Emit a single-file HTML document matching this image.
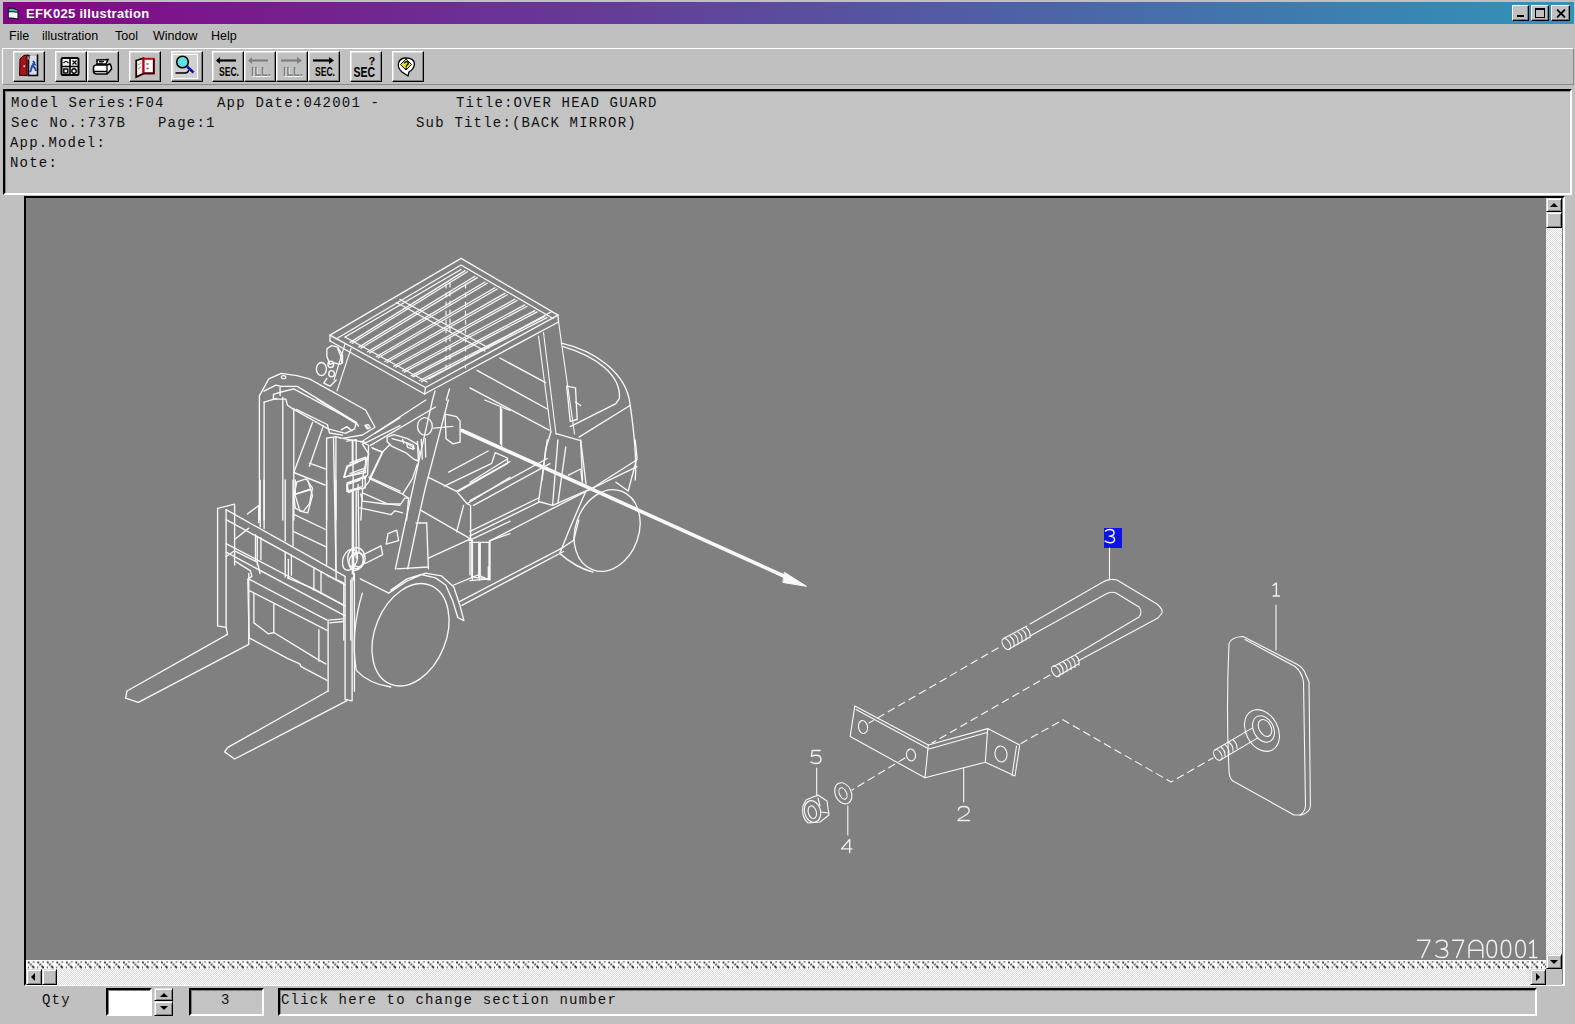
<!DOCTYPE html>
<html><head><meta charset="utf-8">
<style>
*{margin:0;padding:0;box-sizing:border-box}
html,body{width:1575px;height:1024px;overflow:hidden;background:#c0c0c0;font-family:"Liberation Sans",sans-serif;position:relative}
.a{position:absolute}
#title{left:3px;top:2px;width:1571px;height:22px;background:linear-gradient(to right,#850585,#3094b8)}
#title .t{left:23px;top:4px;color:#fff;font-weight:bold;font-size:13px;letter-spacing:0.3px;white-space:pre}
.cb{top:3px;width:17px;height:16px;background:#c0c0c0;border-top:1px solid #fff;border-left:1px solid #fff;border-right:1px solid #000;border-bottom:1px solid #000;box-shadow:inset -1px -1px 0 #808080}
.menu{top:29px;font-size:12.5px;color:#000;white-space:pre}
#tb{left:2px;top:48px;width:1572px;height:37px;border-top:1px solid #fff;border-left:1px solid #fff;border-bottom:1px solid #8a8a8a;border-right:1px solid #8a8a8a}
.btn{top:51px;width:32px;height:31px;background:#c0c0c0;border-top:1px solid #fff;border-left:1px solid #fff;border-right:1px solid #000;border-bottom:1px solid #000;box-shadow:inset -1px -1px 0 #808080,inset 1px 1px 0 #dfdfdf}
.btn svg{position:absolute;left:-1px;top:-1px}
#info{left:3px;top:89px;width:1569px;height:106px;background:#c3c3c3;border-top:2px solid #000;border-left:2px solid #000;border-right:2px solid #fff;border-bottom:2px solid #fff;box-shadow:inset 1px 1px 0 #808080}
.mono{font-family:"Liberation Mono",monospace;font-size:14px;letter-spacing:1.2px;color:#111;white-space:pre;line-height:20px}
#draw{left:24px;top:196px;width:1541px;height:790px;border-top:2px solid #000;border-left:2px solid #000;border-right:2px solid #fff;border-bottom:2px solid #fff;background:#808080}
.sb{background:#c0c0c0;border-top:1px solid #dfdfdf;border-left:1px solid #dfdfdf;border-right:1px solid #000;border-bottom:1px solid #000;box-shadow:inset 1px 1px 0 #fff,inset -1px -1px 0 #808080}
.sunk{border-top:2px solid #000;border-left:2px solid #000;border-right:2px solid #fff;border-bottom:2px solid #fff;box-shadow:inset 1px 1px 0 #808080}
</style></head><body>
<div class="a" id="title">
  <svg class="a" style="left:4px;top:5px" width="14" height="14" viewBox="0 0 14 14"><path d="M0.8,0.8 H6 L11.5,3 V13 L10,12.5 Q6,11 1,11.5 Z" fill="#0a0a30"/><path d="M1.8,1.8 H6 L10.5,3.6 V4.8 L6,4.2 H1.8 Z" fill="#5aa8a8"/><path d="M1.8,5.2 H6 L10.5,5.8 V11.5 Q6,10 1.8,10.6 Z" fill="#f4f8f0"/></svg>
  <div class="a t">EFK025 illustration</div>
  <div class="a cb" style="left:1509px"><div class="a" style="left:4px;top:9px;width:7px;height:2px;background:#000"></div></div>
  <div class="a cb" style="left:1528px;width:18px"><div class="a" style="left:3px;top:2px;width:10px;height:10px;border:1px solid #000;border-top-width:2px"></div></div>
  <div class="a cb" style="left:1548px;width:19px"><svg class="a" style="left:4px;top:3px" width="10" height="9"><path d="M1 0.5L9 8.5M9 0.5L1 8.5" stroke="#000" stroke-width="1.8"/></svg></div>
</div>
<div class="a menu" style="left:9px">File</div>
<div class="a menu" style="left:42px">illustration</div>
<div class="a menu" style="left:115px">Tool</div>
<div class="a menu" style="left:153px">Window</div>
<div class="a menu" style="left:211px">Help</div>
<div class="a" id="tb"></div>
<!-- toolbar buttons -->
<div class="a btn" style="left:13px"><svg width="32" height="31"><path d="M6.5,24.5 L7,8 L9,5.8 L12,4 L14,4.5 L14,24.5 Z" fill="#a8121a" stroke="#200" stroke-width="1"/><circle cx="11.3" cy="15.3" r="1" fill="#fdd"/><path d="M14.5,24 V8.5 H16.5 V24 Z" fill="#111"/><path d="M14,4 L16.5,5 V8" stroke="#111" stroke-width="1.5" fill="none"/><rect x="16.6" y="5" width="7.4" height="18.6" fill="#dcdcf0"/><path d="M24.5,3.5 V24.5 H14.5" stroke="#000" stroke-width="1.6" fill="none"/><path d="M20,10 L21.5,12 L19,15 L18,19 L17,21 M19.5,15 L22,17 L23,20 M19,13 L23,14" stroke="#1a4aa0" stroke-width="1.8" fill="none"/></svg></div>
<div class="a btn" style="left:55px"><svg width="32" height="31"><rect x="6.5" y="7" width="17" height="17" rx="1.5" fill="#f4f4f4" stroke="#000" stroke-width="2"/><path d="M15,7 V24 M6.5,15.5 H23.5" stroke="#000" stroke-width="1.6"/><path d="M8.5,12 Q11,9 13.5,12" stroke="#000" stroke-width="1.2" fill="none"/><path d="M17.5,9.5 L21.5,13.5 M21.5,9.5 L17.5,13.5" stroke="#000" stroke-width="1.2"/><rect x="8.8" y="18" width="4" height="4" fill="none" stroke="#000" stroke-width="1.4"/><circle cx="19" cy="20" r="2.2" fill="none" stroke="#000" stroke-width="1.4"/></svg></div>
<div class="a btn" style="left:87px"><svg width="32" height="31"><path d="M10,9 L21,8.5 L19,13 L10,13 Z" fill="#fff" stroke="#000" stroke-width="1.5"/><path d="M12,10.5 H17 M12,12 H16" stroke="#000" stroke-width="1"/><path d="M6.5,16 Q7,14 9,14 L20,14 L23,13 Q24.5,15 24.5,18 L22,21 L20,23 H9 Q6.5,22.5 6.5,20 Z" fill="#fff" stroke="#000" stroke-width="1.6"/><path d="M7,20.5 H20 M20,14 V23" stroke="#000" stroke-width="1.3"/></svg></div>
<div class="a btn" style="left:129px"><svg width="32" height="31"><path d="M7.2,9.5 L14.4,7.2 V22.6 L7.2,26 Z" fill="#fff0f0" stroke="#200" stroke-width="1.8"/><path d="M9,14 L12,12 M9,18 L12,16" stroke="#999" stroke-width="1"/><rect x="14.6" y="7.8" width="10.2" height="14.6" fill="#fff" stroke="#c00018" stroke-width="2"/><path d="M24.8,8 V22.4 H14.6" stroke="#300" stroke-width="1.6" fill="none"/><path d="M17.5,13 H19.5 M17.5,17.5 H19.5" stroke="#555" stroke-width="1.3"/></svg></div>
<div class="a btn" style="left:171px"><svg width="32" height="31"><path d="M1.8,27.5 V3.3 H26.5" stroke="#fff" stroke-width="1.2" fill="none"/><path d="M1.8,27.5 H26.5 V3.3" stroke="#fff" stroke-width="1.2" fill="none"/><rect x="2.5" y="4" width="23.5" height="23" fill="#d0d0d0"/><circle cx="11.5" cy="11" r="5.8" fill="#5ce4e4" stroke="#000" stroke-width="1.6"/><path d="M16,15.5 L22.5,21.5" stroke="#1010c0" stroke-width="2.6"/><path d="M4.5,22 H14.5 Q17,21.5 18,19" stroke="#000" stroke-width="1.6" fill="none"/></svg></div>
<div class="a btn" style="left:212px"><svg width="32" height="31"><path d="M5,9.5 H24" stroke="#000" stroke-width="2.2"/><path d="M4,9.5 L8,6 V13 Z" fill="#000"/><text x="7" y="25" font-family="Liberation Sans" font-weight="bold" font-size="13" fill="#000" textLength="20" lengthAdjust="spacingAndGlyphs">SEC.</text></svg></div>
<div class="a btn" style="left:244px"><svg width="32" height="31"><path d="M5,9.5 H24" stroke="#808080" stroke-width="2.2"/><path d="M4,9.5 L8,6 V13 Z" fill="#808080"/><text x="8" y="26" font-family="Liberation Sans" font-weight="bold" font-size="13" fill="#fff" textLength="19" lengthAdjust="spacingAndGlyphs">ILL.</text><text x="7" y="25" font-family="Liberation Sans" font-weight="bold" font-size="13" fill="#808080" textLength="20" lengthAdjust="spacingAndGlyphs">ILL.</text></svg></div>
<div class="a btn" style="left:276px"><svg width="32" height="31"><path d="M5,9.5 H24" stroke="#808080" stroke-width="2.2"/><path d="M26,9.5 L21,6 V13 Z" fill="#808080"/><text x="8" y="26" font-family="Liberation Sans" font-weight="bold" font-size="13" fill="#fff" textLength="19" lengthAdjust="spacingAndGlyphs">ILL.</text><text x="7" y="25" font-family="Liberation Sans" font-weight="bold" font-size="13" fill="#808080" textLength="20" lengthAdjust="spacingAndGlyphs">ILL.</text></svg></div>
<div class="a btn" style="left:308px"><svg width="32" height="31"><path d="M5,9.5 H24" stroke="#000" stroke-width="2.2"/><path d="M26,9.5 L21,6 V13 Z" fill="#000"/><text x="7" y="25" font-family="Liberation Sans" font-weight="bold" font-size="13" fill="#000" textLength="20" lengthAdjust="spacingAndGlyphs">SEC.</text></svg></div>
<div class="a btn" style="left:350px"><svg width="32" height="31"><text x="3.5" y="26" font-family="Liberation Sans" font-weight="bold" font-size="14" fill="#000" textLength="21.5" lengthAdjust="spacingAndGlyphs">SEC</text><text x="18.5" y="13.5" font-family="Liberation Sans" font-weight="bold" font-size="11" fill="#000">?</text></svg></div>
<div class="a btn" style="left:392px"><svg width="32" height="31"><path d="M14,7 Q8,7 6.5,12 Q5.5,17 10,21 L16,25 L17,21 Q22,18 22.5,13 Q22,7 14,7 Z" fill="#fff" stroke="#000" stroke-width="1.3"/><path d="M14,8 L19.5,13.5 L14,19 L8.5,13.5 Z" fill="#e8e820" stroke="#000" stroke-width="1"/><text x="11.3" y="17.5" font-family="Liberation Sans" font-weight="bold" font-size="10" fill="#000">?</text></svg></div>

<div class="a" id="info"></div>
<div class="a mono" style="left:11px;top:93px">Model Series:F04</div>
<div class="a mono" style="left:217px;top:93px">App Date:042001 -</div>
<div class="a mono" style="left:456px;top:93px">Title:OVER HEAD GUARD</div>
<div class="a mono" style="left:11px;top:113px">Sec No.:737B</div>
<div class="a mono" style="left:158px;top:113px">Page:1</div>
<div class="a mono" style="left:416px;top:113px">Sub Title:(BACK MIRROR)</div>
<div class="a mono" style="left:10px;top:133px">App.Model:</div>
<div class="a mono" style="left:10px;top:153px">Note:</div>

<div class="a" id="draw"></div>
<!-- DRAWING -->
<svg class="a" style="left:0;top:0" width="1575" height="1024" viewBox="0 0 1575 1024" id="dsvg">
<!--DRAWSTART-->
<g fill="none" stroke-linejoin="round" stroke-linecap="round">
<rect x="1104" y="528" width="18" height="20" fill="#0c12ea" stroke="none"/>
<path d="M1105.47,531.08 C1106.90,529.76 1108.33,529.50 1109.75,529.50 C1112.60,529.50 1114.03,531.08 1114.03,533.06 C1114.03,535.04 1112.12,536.10 1109.28,536.10 C1112.60,536.10 1114.50,537.42 1114.50,539.40 C1114.50,541.64 1112.60,542.70 1109.75,542.70 C1107.85,542.70 1105.95,542.04 1105.00,541.12" stroke="#ffffff" stroke-width="1.4" fill="none"/>
<path d="M1109.5,548.0 L1109.5,579.0" stroke="#f8f8f8" stroke-width="1.1"/>
<path d="M1030,624 L1103,582 Q1109,578 1117,580 L1157,604 Q1163,609 1162,613 L1158,618 L1078,661" stroke="#f8f8f8" stroke-width="1.1" fill="none"/>
<path d="M1030,636 L1106,594 Q1111,591 1116,593 L1139,607 Q1143,612 1139,617 L1075,655" stroke="#f8f8f8" stroke-width="1.1" fill="none"/>
<path d="M1003.5,638.5 L1027.0,626.0" stroke="#f8f8f8" stroke-width="1.1"/>
<path d="M1008.5,649.5 L1030.0,637.0" stroke="#f8f8f8" stroke-width="1.1"/>
<ellipse cx="1006.3" cy="644" rx="3.5" ry="6" transform="rotate(-30 1006.3 644)" stroke="#f8f8f8" stroke-width="1.1"/>
<path d="M1010,636.5 Q1015,639.5 1014,646.5" stroke="#f8f8f8" stroke-width="1.1" fill="none"/>
<path d="M1014,634.3 Q1019,637.3 1018,644.3" stroke="#f8f8f8" stroke-width="1.1" fill="none"/>
<path d="M1018,632.1 Q1023,635.1 1022,642.1" stroke="#f8f8f8" stroke-width="1.1" fill="none"/>
<path d="M1022,629.9 Q1027,632.9 1026,639.9" stroke="#f8f8f8" stroke-width="1.1" fill="none"/>
<path d="M1026,627.7 Q1031,630.7 1030,637.7" stroke="#f8f8f8" stroke-width="1.1" fill="none"/>
<path d="M1053.5,666.5 L1074.0,655.5" stroke="#f8f8f8" stroke-width="1.1"/>
<path d="M1058.0,676.0 L1078.5,664.0" stroke="#f8f8f8" stroke-width="1.1"/>
<ellipse cx="1055.8" cy="671.3" rx="3.5" ry="6" transform="rotate(-30 1055.8 671.3)" stroke="#f8f8f8" stroke-width="1.1"/>
<path d="M1059,664.0 Q1064,667.0 1063,674.0" stroke="#f8f8f8" stroke-width="1.1" fill="none"/>
<path d="M1063,661.8 Q1068,664.8 1067,671.8" stroke="#f8f8f8" stroke-width="1.1" fill="none"/>
<path d="M1067,659.6 Q1072,662.6 1071,669.6" stroke="#f8f8f8" stroke-width="1.1" fill="none"/>
<path d="M1071,657.4 Q1076,660.4 1075,667.4" stroke="#f8f8f8" stroke-width="1.1" fill="none"/>
<path d="M1075,655.2 Q1080,658.2 1079,665.2" stroke="#f8f8f8" stroke-width="1.1" fill="none"/>
<path d="M998.0,648.0 L869.0,723.0" stroke="#f8f8f8" stroke-width="1.1" stroke-dasharray="7 5"/>
<path d="M1050.0,675.0 L932.0,743.0" stroke="#f8f8f8" stroke-width="1.1" stroke-dasharray="7 5"/>
<path d="M905.0,758.0 L852.0,790.0" stroke="#f8f8f8" stroke-width="1.1" stroke-dasharray="7 5"/>
<path d="M1021.0,743.4 L1063.0,719.8 L1171.0,782.0 L1213.0,757.9" stroke="#f8f8f8" stroke-width="1.1" stroke-dasharray="7 5"/>
<path d="M854.8,705.9 L928.3,745.0 L925.0,777.8 L850.2,736.4Z" stroke="#f8f8f8" stroke-width="1.1"/>
<path d="M856.0,709.5 L928.0,748.5" stroke="#f8f8f8" stroke-width="1.1"/>
<path d="M928.3,745.0 L987.7,728.6" stroke="#f8f8f8" stroke-width="1.1"/>
<path d="M929.0,749.0 L987.0,732.5" stroke="#f8f8f8" stroke-width="1.1"/>
<path d="M987.7,728.6 L985.3,762.2" stroke="#f8f8f8" stroke-width="1.1"/>
<path d="M925.0,777.8 L985.3,762.2" stroke="#f8f8f8" stroke-width="1.1"/>
<path d="M987.7,728.6 L1019.7,745.0 L1015.0,776.0 L985.3,762.2" stroke="#f8f8f8" stroke-width="1.1"/>
<path d="M1016.5,746.0 L1012.0,776.0" stroke="#f8f8f8" stroke-width="1.1"/>
<ellipse cx="863" cy="727" rx="4.5" ry="6.5" transform="rotate(-10 863 727)" stroke="#f8f8f8" stroke-width="1.1"/>
<ellipse cx="911" cy="755" rx="4.5" ry="6" transform="rotate(-10 911 755)" stroke="#f8f8f8" stroke-width="1.1"/>
<ellipse cx="1001" cy="754" rx="6" ry="8" transform="rotate(-10 1001 754)" stroke="#f8f8f8" stroke-width="1.1"/>
<path d="M963.7,768.6 L963.7,802.0" stroke="#f8f8f8" stroke-width="1.1"/>
<ellipse cx="843.3" cy="793.3" rx="8" ry="11" transform="rotate(-25 843.3 793.3)" stroke="#f8f8f8" stroke-width="1.1"/>
<ellipse cx="843" cy="793.5" rx="3.5" ry="6" transform="rotate(-25 843 793.5)" stroke="#f8f8f8" stroke-width="1.1"/>
<path d="M847.8,806.0 L847.8,835.0" stroke="#f8f8f8" stroke-width="1.1"/>
<path d="M806,800 L818,795 L827,801 L829,815 L820,822 L808,823 Q801,817 803,806 Z" stroke="#f8f8f8" stroke-width="1.1" fill="none"/>
<ellipse cx="812.5" cy="811.5" rx="8" ry="11" transform="rotate(-15 812.5 811.5)" stroke="#f8f8f8" stroke-width="1.1"/>
<ellipse cx="812.3" cy="812.2" rx="4" ry="6.5" transform="rotate(-15 812.3 812.2)" stroke="#f8f8f8" stroke-width="1.1"/>
<path d="M818.0,798.0 L820.0,806.0" stroke="#f8f8f8" stroke-width="1.1"/>
<path d="M821.0,812.0 L829.0,813.0" stroke="#f8f8f8" stroke-width="1.1"/>
<path d="M816.7,768.0 L816.7,796.0" stroke="#f8f8f8" stroke-width="1.1"/>
<path d="M1243,636.5 L1296.5,664 Q1304,668 1306,675 L1309,681.7 L1310.4,806 Q1310,812 1301.6,815 L1294,815 L1233,781 Q1229,778 1229,770 Q1226,710 1229,643.6 Q1231,637 1243,636.5 Z" stroke="#f8f8f8" stroke-width="1.1" fill="none"/>
<path d="M1245,639.5 L1295,666.5 Q1302,672 1303.5,682 L1305.5,806 Q1305,812 1300,815" stroke="#f8f8f8" stroke-width="1.1" fill="none"/>
<path d="M1276.0,605.0 L1276.0,650.0" stroke="#f8f8f8" stroke-width="1.1"/>
<ellipse cx="1262" cy="730.5" rx="16" ry="22" transform="rotate(-28 1262 730.5)" stroke="#f8f8f8" stroke-width="1.1"/>
<ellipse cx="1263.5" cy="729" rx="10" ry="14" transform="rotate(-28 1263.5 729)" stroke="#f8f8f8" stroke-width="1.1"/>
<ellipse cx="1265" cy="728" rx="6" ry="9" transform="rotate(-28 1265 728)" stroke="#f8f8f8" stroke-width="1.1"/>
<path d="M1214.9,750.0 L1252.1,728.1" stroke="#f8f8f8" stroke-width="1.1"/>
<path d="M1220.7,759.8 L1257.9,737.9" stroke="#f8f8f8" stroke-width="1.1"/>
<ellipse cx="1217.8" cy="754.9" rx="3.5" ry="5.8" transform="rotate(-30 1217.8 754.9)" stroke="#f8f8f8" stroke-width="1.1"/>
<path d="M1221,747.0 Q1225.5,750.5 1225,756.0" stroke="#f8f8f8" stroke-width="1.1" fill="none"/>
<path d="M1225,744.6 Q1229.5,748.1 1229,753.6" stroke="#f8f8f8" stroke-width="1.1" fill="none"/>
<path d="M1229,742.2 Q1233.5,745.7 1233,751.2" stroke="#f8f8f8" stroke-width="1.1" fill="none"/>
<path d="M1233,739.8 Q1237.5,743.3 1237,748.8" stroke="#f8f8f8" stroke-width="1.1" fill="none"/>
<path d="M462.0,430.5 L786.0,577.0" stroke="#f8f8f8" stroke-width="3.6"/>
<path d="M784.7,572.5 L806.5,586.3 L783.2,582.5 Z" stroke="#f8f8f8" stroke-width="1" fill="#f8f8f8"/>
<path d="M1273.20,585.34 L1276.35,583.00 L1276.35,596.00 M1273.20,596.00 L1279.50,596.00" stroke="#f0f0f0" stroke-width="1.4" fill="none"/>
<path d="M958.35,810.00 C958.58,807.62 960.88,806.50 963.75,806.50 C967.20,806.50 969.15,808.18 969.15,810.70 C969.15,813.50 966.05,815.18 962.60,817.00 C959.73,818.54 958.00,819.80 958.00,820.50 L969.50,820.50" stroke="#f0f0f0" stroke-width="1.4" fill="none"/>
<path d="M849.69,852.50 L849.69,839.50 L841.50,848.86 L852.00,848.86" stroke="#f0f0f0" stroke-width="1.4" fill="none"/>
<path d="M820.20,750.50 L812.20,750.50 L811.50,756.35 C813.00,755.44 814.50,755.18 816.00,755.18 C819.20,755.18 821.00,757.00 821.00,759.34 C821.00,761.94 819.00,763.50 816.00,763.50 C814.00,763.50 812.20,762.85 811.00,761.94" stroke="#f0f0f0" stroke-width="1.4" fill="none"/>
<path d="M1417.50,940.30 L1430.00,940.30 L1421.88,957.50" stroke="#f0f0f0" stroke-width="1.5" fill="none"/>
<path d="M1436.30,942.36 C1438.10,940.64 1439.90,940.30 1441.70,940.30 C1445.30,940.30 1447.10,942.36 1447.10,944.94 C1447.10,947.52 1444.70,948.90 1441.10,948.90 C1445.30,948.90 1447.70,950.62 1447.70,953.20 C1447.70,956.12 1445.30,957.50 1441.70,957.50 C1439.30,957.50 1436.90,956.64 1435.70,955.44" stroke="#f0f0f0" stroke-width="1.5" fill="none"/>
<path d="M1452.80,940.30 L1463.60,940.30 L1456.58,957.50" stroke="#f0f0f0" stroke-width="1.5" fill="none"/>
<path d="M1469.00,957.50 L1469.00,948.04 C1469.00,942.88 1472.45,940.30 1475.90,940.30 C1479.35,940.30 1482.80,942.88 1482.80,948.04 L1482.80,957.50 M1469.00,950.28 L1482.80,950.28" stroke="#f0f0f0" stroke-width="1.5" fill="none"/>
<path d="M1491.75,940.30 C1487.95,940.30 1487.00,945.46 1487.00,948.90 C1487.00,952.34 1487.95,957.50 1491.75,957.50 C1495.55,957.50 1496.50,952.34 1496.50,948.90 C1496.50,945.46 1495.55,940.30 1491.75,940.30 Z" stroke="#f0f0f0" stroke-width="1.5" fill="none"/>
<path d="M1506.00,940.30 C1502.24,940.30 1501.30,945.46 1501.30,948.90 C1501.30,952.34 1502.24,957.50 1506.00,957.50 C1509.76,957.50 1510.70,952.34 1510.70,948.90 C1510.70,945.46 1509.76,940.30 1506.00,940.30 Z" stroke="#f0f0f0" stroke-width="1.5" fill="none"/>
<path d="M1520.55,940.30 C1516.75,940.30 1515.80,945.46 1515.80,948.90 C1515.80,952.34 1516.75,957.50 1520.55,957.50 C1524.35,957.50 1525.30,952.34 1525.30,948.90 C1525.30,945.46 1524.35,940.30 1520.55,940.30 Z" stroke="#f0f0f0" stroke-width="1.5" fill="none"/>
<path d="M1529.78,943.40 L1533.29,940.30 L1533.29,957.50 M1529.78,957.50 L1536.80,957.50" stroke="#f0f0f0" stroke-width="1.5" fill="none"/>
<path d="M330.0,335.2 L461.1,258.3 L558.0,315.2" stroke="#f8f8f8" stroke-width="1.35"/>
<path d="M330.0,335.2 L425.5,387.5 L558.0,315.2" stroke="#f8f8f8" stroke-width="1.35"/>
<path d="M330.0,341.0 L424.5,394.0 L558.5,322.0" stroke="#f8f8f8" stroke-width="1.35"/>
<path d="M558.0,315.2 L558.5,322.0" stroke="#f8f8f8" stroke-width="1.35"/>
<path d="M425.5,387.5 L424.5,394.0" stroke="#f8f8f8" stroke-width="1.35"/>
<path d="M330.0,335.2 L330.0,341.0" stroke="#f8f8f8" stroke-width="1.35"/>
<path d="M336.0,339.0 L461.0,265.0 L553.0,318.5" stroke="#f8f8f8" stroke-width="1.35"/>
<path d="M345.0,337.0 L427.0,382.0" stroke="#f8f8f8" stroke-width="1.35"/>
<path d="M429.0,379.0 L551.0,312.0" stroke="#f8f8f8" stroke-width="1.35"/>
<path d="M345.0,337.0 L461.0,269.5" stroke="#f8f8f8" stroke-width="1.35"/>
<path d="M396.5,302.5 L485.0,351.0" stroke="#f8f8f8" stroke-width="1.35"/>
<path d="M400.0,299.5 L489.0,348.0" stroke="#f8f8f8" stroke-width="1.35"/>
<path d="M350.1,342.4 L465.1,270.6" stroke="#f8f8f8" stroke-width="1.3"/>
<path d="M352.1,343.5 L467.3,271.8" stroke="#f8f8f8" stroke-width="1.3"/>
<path d="M358.8,347.1 L475.0,276.3" stroke="#f8f8f8" stroke-width="1.3"/>
<path d="M360.8,348.2 L477.3,277.6" stroke="#f8f8f8" stroke-width="1.3"/>
<path d="M367.5,351.9 L485.0,282.0" stroke="#f8f8f8" stroke-width="1.3"/>
<path d="M369.5,353.0 L487.2,283.3" stroke="#f8f8f8" stroke-width="1.3"/>
<path d="M376.2,356.7 L494.9,287.7" stroke="#f8f8f8" stroke-width="1.3"/>
<path d="M378.2,357.8 L497.2,289.0" stroke="#f8f8f8" stroke-width="1.3"/>
<path d="M384.9,361.5 L504.9,293.4" stroke="#f8f8f8" stroke-width="1.3"/>
<path d="M386.9,362.5 L507.2,294.7" stroke="#f8f8f8" stroke-width="1.3"/>
<path d="M393.6,366.2 L514.9,299.2" stroke="#f8f8f8" stroke-width="1.3"/>
<path d="M395.6,367.3 L517.1,300.5" stroke="#f8f8f8" stroke-width="1.3"/>
<path d="M402.3,371.0 L524.8,304.9" stroke="#f8f8f8" stroke-width="1.3"/>
<path d="M404.3,372.1 L527.1,306.2" stroke="#f8f8f8" stroke-width="1.3"/>
<path d="M411.0,375.8 L534.8,310.6" stroke="#f8f8f8" stroke-width="1.3"/>
<path d="M413.0,376.8 L537.1,311.9" stroke="#f8f8f8" stroke-width="1.3"/>
<path d="M419.7,380.5 L544.8,316.3" stroke="#f8f8f8" stroke-width="1.3"/>
<path d="M421.7,381.6 L547.0,317.6" stroke="#f8f8f8" stroke-width="1.3"/>
<path d="M446.0,284.0 L446.0,371.0" stroke="#f8f8f8" stroke-width="1.2" stroke-dasharray="4 5"/>
<path d="M450.0,283.0 L450.0,372.0" stroke="#f8f8f8" stroke-width="1.2" stroke-dasharray="4 5"/>
<path d="M465.5,284.0 L465.5,368.0" stroke="#f8f8f8" stroke-width="1.2" stroke-dasharray="4 5"/>
<path d="M558.5,321.5 L574.5,434.0" stroke="#f8f8f8" stroke-width="1.1"/>
<path d="M543.5,332.5 L556.0,434.0" stroke="#f8f8f8" stroke-width="1.1"/>
<path d="M538.5,336.0 L551.0,432.0" stroke="#f8f8f8" stroke-width="1.1"/>
<path d="M351.0,348.5 L337.0,391.0" stroke="#f8f8f8" stroke-width="1.1"/>
<path d="M345.0,344.0 L334.0,380.0" stroke="#f8f8f8" stroke-width="1.1"/>
<path d="M435.0,391.0 L432.5,400.0" stroke="#f8f8f8" stroke-width="1.35"/>
<path d="M449.5,389.0 L446.3,400.0" stroke="#f8f8f8" stroke-width="1.35"/>
<path d="M259.4,460.0 L259.4,395.9 L268.8,378.8 L281.2,373.3 L296.9,375.6 L309.4,378.8 L365.6,410.0 L375.0,427.2 L362.5,435.0 L343.8,438.1" stroke="#f8f8f8" stroke-width="1.35"/>
<path d="M273.4,399.1 L273.4,394.4 L281.2,392.0 L293.8,388.9 L356.2,422.5 L354.7,428.8 L345.3,433.4 L328.1,428.8 L292.2,408.4 L287.5,405.3 L285.9,399.1 L273.4,399.1" stroke="#f8f8f8" stroke-width="1.35"/>
<path d="M264.1,402.2 L264.1,520.0" stroke="#f8f8f8" stroke-width="1.35"/>
<path d="M282.8,397.5 L282.8,520.0" stroke="#f8f8f8" stroke-width="1.35"/>
<path d="M293.8,408.4 L293.8,520.0" stroke="#f8f8f8" stroke-width="1.35"/>
<path d="M264.1,402.2 L276.6,398.3" stroke="#f8f8f8" stroke-width="1.35"/>
<path d="M326.6,438.1 L326.6,520.0" stroke="#f8f8f8" stroke-width="1.35"/>
<path d="M335.9,436.6 L335.9,520.0" stroke="#f8f8f8" stroke-width="1.35"/>
<path d="M326.6,438.1 L335.9,436.6 L340.6,438.1" stroke="#f8f8f8" stroke-width="1.35"/>
<path d="M352.3,441.2 L352.3,461.6" stroke="#f8f8f8" stroke-width="1.35"/>
<path d="M356.2,439.7 L356.2,461.6" stroke="#f8f8f8" stroke-width="1.35"/>
<path d="M312.5,422.5 L293.8,472.5" stroke="#f8f8f8" stroke-width="1.35"/>
<path d="M323.4,425.6 L309.4,466.2" stroke="#f8f8f8" stroke-width="1.35"/>
<path d="M293.8,472.5 L325.0,485.0" stroke="#f8f8f8" stroke-width="1.35"/>
<path d="M309.4,463.1 L326.6,469.4" stroke="#f8f8f8" stroke-width="1.35"/>
<ellipse cx="283.59375" cy="377.1875" rx="2.1875" ry="1.5625" transform="rotate(0 283.59375 377.1875)" stroke="#f8f8f8" stroke-width="1.2"/>
<path d="M296.9,481.9 L306.2,478.8 L312.5,488.1 L309.4,503.8 L303.1,511.6 L295.3,508.4 L293.8,495.9 L296.9,481.9" stroke="#f8f8f8" stroke-width="1.35"/>
<path d="M295.3,494.4 L310.9,489.7" stroke="#f8f8f8" stroke-width="1.35"/>
<path d="M365.6,425.6 L368.8,428.8" stroke="#f8f8f8" stroke-width="1.35"/>
<path d="M346.9,441.2 L356.2,439.7" stroke="#f8f8f8" stroke-width="1.35"/>
<path d="M362.5,444.4 L368.8,453.8 L364.1,469.4 L362.5,478.8" stroke="#f8f8f8" stroke-width="1.35"/>
<path d="M375.0,433.4 L400.0,417.8" stroke="#f8f8f8" stroke-width="1.35"/>
<path d="M362.5,444.4 L400.0,425.6" stroke="#f8f8f8" stroke-width="1.35"/>
<path d="M346.9,466.2 L365.6,458.4 L365.6,472.5 L343.8,477.2 L346.9,466.2" stroke="#f8f8f8" stroke-width="1.35"/>
<path d="M346.9,483.4 L362.5,477.2 L362.5,486.6 L346.9,491.2 L346.9,483.4" stroke="#f8f8f8" stroke-width="1.35"/>
<path d="M371.9,447.5 L382.8,452.2 L368.8,481.9 L362.5,489.7 L360.9,520.0" stroke="#f8f8f8" stroke-width="1.35"/>
<path d="M368.8,477.2 L400.0,491.2" stroke="#f8f8f8" stroke-width="1.35"/>
<path d="M362.5,492.8 L387.5,503.8 L400.0,505.3" stroke="#f8f8f8" stroke-width="1.35"/>
<path d="M259.4,460.0 L259.4,520.0" stroke="#f8f8f8" stroke-width="1.35"/>
<path d="M217.6,508.3 L217.6,625.8 L226.1,627.3 L226.1,509.7" stroke="#f8f8f8" stroke-width="1.35"/>
<path d="M217.6,508.3 L234.6,504.1 L234.6,565.0" stroke="#f8f8f8" stroke-width="1.35"/>
<path d="M227.5,634.3 L127.0,691.0 L125.6,698.1 L138.3,702.3 L248.8,644.3 L248.8,573.5" stroke="#f8f8f8" stroke-width="1.35"/>
<path d="M226.1,627.3 L227.5,634.3" stroke="#f8f8f8" stroke-width="1.35"/>
<path d="M345.1,576.3 L345.1,699.5 L352.1,700.9 L352.1,577.7" stroke="#f8f8f8" stroke-width="1.35"/>
<path d="M328.1,691.0 L227.5,747.6 L224.7,751.9 L234.6,759.0 L346.5,700.9" stroke="#f8f8f8" stroke-width="1.35"/>
<path d="M328.1,621.6 L328.1,691.0" stroke="#f8f8f8" stroke-width="1.35"/>
<path d="M226.1,509.7 L345.1,576.3" stroke="#f8f8f8" stroke-width="1.35"/>
<path d="M226.1,519.6 L345.1,584.8" stroke="#f8f8f8" stroke-width="1.35"/>
<path d="M226.1,543.7 L345.1,606.0" stroke="#f8f8f8" stroke-width="1.35"/>
<path d="M226.1,552.2 L345.1,615.9" stroke="#f8f8f8" stroke-width="1.35"/>
<path d="M257.3,536.6 L257.3,565.0" stroke="#f8f8f8" stroke-width="1.35"/>
<path d="M288.4,559.3 L288.4,577.7" stroke="#f8f8f8" stroke-width="1.35"/>
<path d="M313.9,567.8 L313.9,590.4" stroke="#f8f8f8" stroke-width="1.35"/>
<path d="M321.0,572.0 L321.0,593.3" stroke="#f8f8f8" stroke-width="1.35"/>
<path d="M226.1,556.5 L234.6,550.8 L257.3,562.1 L260.1,573.5" stroke="#f8f8f8" stroke-width="1.35"/>
<path d="M234.6,539.5 L248.8,528.1" stroke="#f8f8f8" stroke-width="1.35"/>
<path d="M247.4,514.0 L258.7,505.5 L258.7,522.5" stroke="#f8f8f8" stroke-width="1.35"/>
<path d="M260.2,480.0 L260.2,526.9" stroke="#f8f8f8" stroke-width="1.35"/>
<path d="M264.1,480.0 L264.1,528.4" stroke="#f8f8f8" stroke-width="1.35"/>
<path d="M285.2,480.0 L285.2,540.9" stroke="#f8f8f8" stroke-width="1.35"/>
<path d="M293.0,480.0 L293.0,545.6" stroke="#f8f8f8" stroke-width="1.35"/>
<path d="M326.6,480.0 L326.6,564.4" stroke="#f8f8f8" stroke-width="1.35"/>
<path d="M335.9,480.0 L335.9,570.6" stroke="#f8f8f8" stroke-width="1.35"/>
<path d="M285.2,551.9 L285.2,576.9" stroke="#f8f8f8" stroke-width="1.35"/>
<path d="M291.4,555.0 L291.4,575.3" stroke="#f8f8f8" stroke-width="1.35"/>
<path d="M255.5,534.7 L255.5,561.2" stroke="#f8f8f8" stroke-width="1.35"/>
<path d="M260.9,537.8 L260.9,559.7" stroke="#f8f8f8" stroke-width="1.35"/>
<path d="M293.8,514.4 L326.6,530.0" stroke="#f8f8f8" stroke-width="1.35"/>
<path d="M293.8,531.6 L326.6,547.2" stroke="#f8f8f8" stroke-width="1.35"/>
<path d="M295.3,494.1 L309.4,489.4" stroke="#f8f8f8" stroke-width="1.35"/>
<path d="M295.3,480.0 L295.3,495.6 L300.0,511.2 L307.8,512.8 L309.4,506.6 L312.5,495.6 L307.8,480.0" stroke="#f8f8f8" stroke-width="1.35"/>
<path d="M346.9,484.7 L360.0,480.0" stroke="#f8f8f8" stroke-width="1.35"/>
<path d="M346.9,484.7 L348.4,492.5 L360.0,487.8" stroke="#f8f8f8" stroke-width="1.35"/>
<path d="M352.3,492.5 L352.3,573.8" stroke="#f8f8f8" stroke-width="1.35"/>
<path d="M356.2,490.9 L356.2,558.1" stroke="#f8f8f8" stroke-width="1.35"/>
<ellipse cx="350.0" cy="559.6875" rx="7.03125" ry="10.9375" transform="rotate(20 350.0 559.6875)" stroke="#f8f8f8" stroke-width="1.35"/>
<ellipse cx="356.25" cy="561.25" rx="7.03125" ry="9.375" transform="rotate(20 356.25 561.25)" stroke="#f8f8f8" stroke-width="1.35"/>
<path d="M327.3,575.3 L343.8,583.1 L343.8,640.0" stroke="#f8f8f8" stroke-width="1.35"/>
<path d="M350.8,580.0 L350.8,640.0" stroke="#f8f8f8" stroke-width="1.35"/>
<ellipse cx="410.5015873015873" cy="634.7936507936508" rx="35.55555555555556" ry="53.231746031746034" transform="rotate(22 410.5015873015873 634.7936507936508)" stroke="#f8f8f8" stroke-width="1.35"/>
<path d="M362.3492063492063,593.1428571428571 Q350.1587301587302,633.7777777777778 356.25396825396825,670.3492063492064 Q368.44444444444446,683.5555555555555 390.7936507936508,687.0095238095238" stroke="#f8f8f8" stroke-width="1.35" fill="none"/>
<path d="M360.3,578.9 L388.8,593.1 L407.0,581.0 L425.3,573.2 L441.6,575.9 L453.8,587.0 L459.9,605.3 L463.9,620.6 L457.8,617.5 L452.8,601.3 L445.7,585.0 L435.5,577.9 L421.3,574.5 L407.0,578.9 L390.8,590.1" stroke="#f8f8f8" stroke-width="1.35"/>
<path d="M459.9,601.3 L561.5,548.4" stroke="#f8f8f8" stroke-width="1.35"/>
<path d="M461.9,605.3 L563.5,551.5" stroke="#f8f8f8" stroke-width="1.35"/>
<path d="M561.5,548.4 L573.7,540.3 L578.7,520.0" stroke="#f8f8f8" stroke-width="1.35"/>
<path d="M453.8,585.0 L478.2,574.9 L488.3,579.9 L488.3,566.7" stroke="#f8f8f8" stroke-width="1.35"/>
<path d="M470.0,542.3 L470.0,574.9" stroke="#f8f8f8" stroke-width="1.35"/>
<path d="M480.2,542.3 L480.2,574.9" stroke="#f8f8f8" stroke-width="1.35"/>
<path d="M489.3,542.3 L489.3,578.9" stroke="#f8f8f8" stroke-width="1.35"/>
<path d="M470.0,542.3 L489.3,542.3" stroke="#f8f8f8" stroke-width="1.35"/>
<ellipse cx="607.109375" cy="530.52734375" rx="31.640625" ry="41.8359375" transform="rotate(20 607.109375 530.52734375)" stroke="#f8f8f8" stroke-width="1.35"/>
<path d="M586.015625,490.9765625 Q571.953125,522.6171875 559.6484375,553.37890625 Q575.46875,567.44140625 593.046875,572.1875" stroke="#f8f8f8" stroke-width="1.35" fill="none"/>
<path d="M333.5,437.8 L336.2,580.0" stroke="#f8f8f8" stroke-width="1.35"/>
<path d="M352.9,440.4 L353.7,580.0" stroke="#f8f8f8" stroke-width="1.35"/>
<path d="M358.1,484.4 L359.0,552.9" stroke="#f8f8f8" stroke-width="1.35"/>
<path d="M340.5,437.8 L352.9,440.4 L365.2,442.2" stroke="#f8f8f8" stroke-width="1.35"/>
<path d="M360.8,442.2 L425.8,400.0" stroke="#f8f8f8" stroke-width="1.35"/>
<path d="M370.4,445.4 L435.5,407.0" stroke="#f8f8f8" stroke-width="1.35"/>
<path d="M432.5,400.0 L424.6,435.2 L405.2,523.0 L395.4,568.8" stroke="#f8f8f8" stroke-width="1.35"/>
<path d="M448.3,400.0 L436.9,443.9 L425.3,487.9 L417.4,523.0 L407.7,568.8" stroke="#f8f8f8" stroke-width="1.35"/>
<ellipse cx="424.921875" cy="426.3671875" rx="7.3828125" ry="8.7890625" transform="rotate(0 424.921875 426.3671875)" stroke="#f8f8f8" stroke-width="1.35"/>
<path d="M433.7,428.1 L453.0,426.4" stroke="#f8f8f8" stroke-width="1.35"/>
<path d="M445.1,414.1 L456.6,416.7 L460.1,421.1 L460.1,442.2 L453.0,443.9 L446.0,438.7 L445.1,414.1" stroke="#f8f8f8" stroke-width="1.35"/>
<path d="M344.1,477.3 L365.2,470.3 L366.9,458.0 L347.6,466.8 L344.1,477.3" stroke="#f8f8f8" stroke-width="1.35"/>
<path d="M347.6,482.6 L365.2,477.3 L365.2,487.9 L347.6,491.4 L347.6,482.6" stroke="#f8f8f8" stroke-width="1.35"/>
<path d="M428.4,477.3 L456.6,491.4 L467.1,503.7 L510.0,477.3" stroke="#f8f8f8" stroke-width="1.35"/>
<path d="M448.7,472.1 L488.2,451.0" stroke="#f8f8f8" stroke-width="1.35"/>
<path d="M444.3,486.1 L491.7,463.3 L495.2,452.7 L507.5,458.0 L507.5,463.3 L458.3,491.4" stroke="#f8f8f8" stroke-width="1.35"/>
<path d="M456.6,491.4 L510.0,461.5" stroke="#f8f8f8" stroke-width="1.35"/>
<path d="M467.1,503.7 L470.6,505.5 L470.6,540.6" stroke="#f8f8f8" stroke-width="1.35"/>
<path d="M463.6,505.5 L456.6,531.8" stroke="#f8f8f8" stroke-width="1.35"/>
<path d="M421.4,510.7 L470.6,538.9" stroke="#f8f8f8" stroke-width="1.35"/>
<path d="M468.9,540.6 L510.0,521.3" stroke="#f8f8f8" stroke-width="1.35"/>
<path d="M428.4,558.2 L470.6,538.9" stroke="#f8f8f8" stroke-width="1.35"/>
<path d="M472.4,540.6 L472.4,580.0" stroke="#f8f8f8" stroke-width="1.35"/>
<path d="M479.4,542.4 L479.4,580.0" stroke="#f8f8f8" stroke-width="1.35"/>
<path d="M490.0,540.6 L490.0,580.0" stroke="#f8f8f8" stroke-width="1.35"/>
<path d="M490.0,540.6 L510.0,533.6" stroke="#f8f8f8" stroke-width="1.35"/>
<path d="M500.5,407.0 L500.5,443.9" stroke="#f8f8f8" stroke-width="1.35"/>
<path d="M484.7,400.0 L510.0,410.5" stroke="#f8f8f8" stroke-width="1.35"/>
<path d="M386.2,544.1 L388.0,533.6 L396.8,530.1 L398.6,540.6 L386.2,544.1" stroke="#f8f8f8" stroke-width="1.35"/>
<ellipse cx="356.3671875" cy="558.203125" rx="8.7890625" ry="10.546875" transform="rotate(0 356.3671875 558.203125)" stroke="#f8f8f8" stroke-width="1.35"/>
<ellipse cx="358.125" cy="559.9609375" rx="5.2734375" ry="7.03125" transform="rotate(0 358.125 559.9609375)" stroke="#f8f8f8" stroke-width="1.35"/>
<path d="M363.4,554.7 L381.0,545.9 L382.7,554.7 L365.2,563.5" stroke="#f8f8f8" stroke-width="1.35"/>
<path d="M426.7,523.0 L428.4,568.8" stroke="#f8f8f8" stroke-width="1.35"/>
<path d="M416.1,523.0 L426.7,523.0" stroke="#f8f8f8" stroke-width="1.35"/>
<path d="M396.8,568.8 L428.4,567.0" stroke="#f8f8f8" stroke-width="1.35"/>
<path d="M561.40625,343.06640625 C596.5625,350.9765625 626.4453125,373.828125 629.9609375,403.7109375 C634.35546875,433.59375 636.9921875,458.203125 635.234375,480.0" stroke="#f8f8f8" stroke-width="1.35" fill="none"/>
<path d="M563.1640625,346.58203125 C596.5625,356.25 621.171875,375.5859375 619.4140625,398.4375 L615.8984375,403.7109375 L570.1953125,426.5625" stroke="#f8f8f8" stroke-width="1.35" fill="none"/>
<path d="M630.0,405.5 L579.0,437.1" stroke="#f8f8f8" stroke-width="1.35"/>
<path d="M566.7,386.1 L575.5,387.9 L577.2,419.5 L570.2,421.3 L566.7,386.1" stroke="#f8f8f8" stroke-width="1.35"/>
<path d="M575.5,402.0 L580.7,405.5" stroke="#f8f8f8" stroke-width="1.35"/>
<path d="M499.9,358.0 L545.6,382.6" stroke="#f8f8f8" stroke-width="1.35"/>
<path d="M477.0,370.3 L547.3,409.0" stroke="#f8f8f8" stroke-width="1.35"/>
<path d="M470.0,387.9 L549.1,430.1" stroke="#f8f8f8" stroke-width="1.35"/>
<path d="M550.9,431.8 L545.6,449.4 L542.1,480.0" stroke="#f8f8f8" stroke-width="1.35"/>
<path d="M556.1,433.6 L580.7,440.6 L582.5,480.0" stroke="#f8f8f8" stroke-width="1.35"/>
<path d="M501.6,409.0 L501.6,449.4" stroke="#f8f8f8" stroke-width="1.35"/>
<path d="M471.8,540.2 L471.8,577.1 L489.3,578.9 L489.3,542.0" stroke="#f8f8f8" stroke-width="1.35"/>
<path d="M478.8,542.0 L478.8,577.1" stroke="#f8f8f8" stroke-width="1.35"/>
<path d="M326.9,348.8 L331.6,345.6 L337.8,347.2 L342.5,355.0 L342.5,362.8 L339.4,364.4 L334.7,362.8 L330.0,364.4 L326.9,356.6 L326.9,348.8" stroke="#f8f8f8" stroke-width="1.35"/>
<path d="M337.8,348.8 L340.9,356.6 L341.7,362.8" stroke="#f8f8f8" stroke-width="1.35"/>
<ellipse cx="321.40625" cy="369.0625" rx="5.0" ry="6.5625" transform="rotate(0 321.40625 369.0625)" stroke="#f8f8f8" stroke-width="1.35"/>
<ellipse cx="330.78125" cy="364.375" rx="2.8125" ry="3.125" transform="rotate(0 330.78125 364.375)" stroke="#f8f8f8" stroke-width="1.35"/>
<ellipse cx="331.5625" cy="373.75" rx="2.8125" ry="3.125" transform="rotate(0 331.5625 373.75)" stroke="#f8f8f8" stroke-width="1.35"/>
<path d="M326.9,378.4 L323.8,383.1 L330.0,386.2 L336.2,380.0" stroke="#f8f8f8" stroke-width="1.35"/>
<path d="M470.0,531.4 L538.6,498.0" stroke="#f8f8f8" stroke-width="1.35"/>
<path d="M470.0,535.8 L539.4,501.9" stroke="#f8f8f8" stroke-width="1.35"/>
<path d="M538.6,501.5 L552.6,505.4 L593.0,487.8 L637.0,459.7" stroke="#f8f8f8" stroke-width="1.35"/>
<path d="M489.3,541.1 L586.0,491.3 L637.0,466.7" stroke="#f8f8f8" stroke-width="1.35"/>
<path d="M547.3,440.0 L538.6,501.5" stroke="#f8f8f8" stroke-width="1.35"/>
<path d="M557.9,440.0 L552.6,505.0" stroke="#f8f8f8" stroke-width="1.35"/>
<path d="M565.8,447.0 L557.9,503.3" stroke="#f8f8f8" stroke-width="1.35"/>
<path d="M580.7,440.0 L586.0,483.9" stroke="#f8f8f8" stroke-width="1.35"/>
<path d="M568.4,475.2 L580.7,469.0 L582.5,483.9" stroke="#f8f8f8" stroke-width="1.35"/>
<path d="M635.2,440.0 L637.0,457.6 L628.2,491.0 L615.9,482.2" stroke="#f8f8f8" stroke-width="1.35"/>
<path d="M470.0,482.2 L506.9,459.3" stroke="#f8f8f8" stroke-width="1.35"/>
<path d="M470.0,500.6 L547.3,458.5" stroke="#f8f8f8" stroke-width="1.35"/>
<path d="M473.5,505.4 L550.0,463.7" stroke="#f8f8f8" stroke-width="1.35"/>
<path d="M470.0,580.6 L489.3,578.9" stroke="#f8f8f8" stroke-width="1.35"/>
<path d="M249.1,637.9 L247.8,579.1 L251.9,576.4 L250.5,570.9 L235.5,561.4" stroke="#f8f8f8" stroke-width="1.35"/>
<path d="M249.1,579.1 L327.1,620.2" stroke="#f8f8f8" stroke-width="1.35"/>
<path d="M249.8,590.8 L327.1,630.4" stroke="#f8f8f8" stroke-width="1.35"/>
<path d="M253.9,592.8 L253.9,622.9 L268.3,633.8 L273.8,632.5 L316.1,658.4 L325.7,663.9" stroke="#f8f8f8" stroke-width="1.35"/>
<path d="M273.8,603.8 L273.8,632.5" stroke="#f8f8f8" stroke-width="1.35"/>
<path d="M249.1,637.9 L287.4,658.4 L299.7,663.9 L301.1,666.6 L327.1,680.3" stroke="#f8f8f8" stroke-width="1.35"/>
<path d="M318.9,629.7 L318.9,661.2" stroke="#f8f8f8" stroke-width="1.35"/>
<path d="M328.4,620.2 L343.5,618.8" stroke="#f8f8f8" stroke-width="1.35"/>
<path d="M329.8,622.9 L343.5,621.5" stroke="#f8f8f8" stroke-width="1.35"/>
<path d="M287.4,577.8 L313.4,588.7 L343.5,605.1" stroke="#f8f8f8" stroke-width="1.35"/>
<path d="M354.4,573.7 L354.4,691.2" stroke="#f8f8f8" stroke-width="1.35"/>
<path d="M264.0,391.2 L275.8,385.2 L281.2,386.3 L297.3,386.3 L356.3,422.3 L358.5,426.1" stroke="#f8f8f8" stroke-width="1.35"/>
<path d="M280.1,386.9 L280.1,395.4" stroke="#f8f8f8" stroke-width="1.35"/>
<path d="M316.6,398.7 L357.4,424.5" stroke="#f8f8f8" stroke-width="1.35"/>
<path d="M296.2,409.4 L327.3,424.5 L329.5,433.0 L342.4,435.2" stroke="#f8f8f8" stroke-width="1.35"/>
<path d="M341.3,429.8 L346.7,426.6 L352.1,430.9" stroke="#f8f8f8" stroke-width="1.35"/>
<path d="M364.9,425.5 L368.2,424.5 L370.3,427.7 L367.1,428.8 L364.9,425.5" stroke="#f8f8f8" stroke-width="1.35"/>
<path d="M387.1,437.1 L393.9,434.6 L407.6,438.6 L417.4,444.4 L419.3,452.2 L418.4,461.0 L413.5,459.1 L406.6,453.2 L392.0,446.4 L387.1,441.5 L387.1,437.1" stroke="#f8f8f8" stroke-width="1.35"/>
<path d="M392.0,438.6 L404.7,442.0 L414.5,448.3" stroke="#f8f8f8" stroke-width="1.35"/>
<path d="M402.7,439.5 L403.7,443.4" stroke="#f8f8f8" stroke-width="1.35"/>
<path d="M406.6,442.5 L413.5,445.4 L413.5,449.3 L407.6,447.3 L406.6,442.5" stroke="#f8f8f8" stroke-width="1.35"/>
<path d="M417.4,441.5 L418.4,461.0" stroke="#f8f8f8" stroke-width="1.35"/>
<path d="M421.3,439.5 L422.3,459.1" stroke="#f8f8f8" stroke-width="1.35"/>
<path d="M425.2,438.6 L425.7,457.1" stroke="#f8f8f8" stroke-width="1.35"/>
<path d="M390.0,444.4 L382.2,452.2 L369.5,478.6 L402.7,494.2 L412.5,478.6 L417.4,463.9" stroke="#f8f8f8" stroke-width="1.35"/>
<path d="M372.5,448.3 L382.2,452.2" stroke="#f8f8f8" stroke-width="1.35"/>
<path d="M360.7,494.2 L362.7,501.1 L385.2,504.0 L400.8,504.0 L404.7,498.1 L408.6,498.1" stroke="#f8f8f8" stroke-width="1.35"/>
<path d="M359.8,507.9 L391.0,514.7 L394.9,510.8 L402.7,512.8" stroke="#f8f8f8" stroke-width="1.35"/>
<path d="M362.7,442.5 L368.6,445.4 L367.6,474.7 L364.6,478.6" stroke="#f8f8f8" stroke-width="1.35"/>
<path d="M350.0,463.0 L365.6,457.1" stroke="#f8f8f8" stroke-width="1.35"/>
<path d="M350.0,473.7 L365.6,467.9" stroke="#f8f8f8" stroke-width="1.35"/>
<path d="M350.0,482.5 L366.6,475.7" stroke="#f8f8f8" stroke-width="1.35"/>
<path d="M402.7,494.2 L408.6,498.1 L406.6,520.0" stroke="#f8f8f8" stroke-width="1.35"/>
</g>
<!--DRAWEND-->
</svg>

<!-- hatched strip -->
<svg class="a" style="left:26px;top:960px" width="1520" height="9">
<defs><pattern id="hx" x="1.8" y="1.5" width="9.517" height="9" patternUnits="userSpaceOnUse">
<g fill="#000"><circle cx="0" cy="0" r="0.95"/><circle cx="1.05" cy="1.05" r="0.9"/><circle cx="4.9" cy="4.9" r="0.9"/><circle cx="5.9" cy="5.9" r="0.95"/><circle cx="5.9" cy="0" r="0.95"/><circle cx="0" cy="5.9" r="0.95"/></g>
<path d="M2.2,3.9 L3.8,2.1" stroke="#333" stroke-width="1.4"/></pattern></defs>
<rect width="1520" height="9" fill="#fcfcfc"/><rect width="1520" height="9" fill="url(#hx)"/>
</svg>
<!-- horizontal scrollbar -->
<div class="a" style="left:26px;top:969px;width:1520px;height:16px;background:repeating-conic-gradient(#fff 0 25%,#d8d8d8 0 50%) 0 0/2px 2px"></div>
<div class="a sb" style="left:26px;top:969px;width:16px;height:16px"><svg class="a" style="left:4px;top:3px" width="6" height="8"><path d="M4 0L0 4L4 8z" fill="#000"/></svg></div>
<div class="a sb" style="left:42px;top:969px;width:15px;height:16px"></div>
<div class="a sb" style="left:1530px;top:969px;width:16px;height:16px"><svg class="a" style="left:5px;top:3px" width="6" height="8"><path d="M0 0L4 4L0 8z" fill="#000"/></svg></div>
<!-- vertical scrollbar -->
<div class="a" style="left:1546px;top:198px;width:16px;height:771px;background:repeating-conic-gradient(#fff 0 25%,#d8d8d8 0 50%) 0 0/2px 2px"></div>
<div class="a sb" style="left:1546px;top:198px;width:16px;height:14px"><svg class="a" style="left:3px;top:4px" width="8" height="5"><path d="M0 4L4 0L8 4z" fill="#000"/></svg></div>
<div class="a sb" style="left:1546px;top:212px;width:16px;height:16px"></div>
<div class="a sb" style="left:1546px;top:954px;width:16px;height:15px"><svg class="a" style="left:3px;top:5px" width="8" height="5"><path d="M0 0L4 4L8 0z" fill="#000"/></svg></div>
<div class="a" style="left:1546px;top:969px;width:16px;height:16px;background:#c0c0c0"></div>

<!-- bottom bar -->
<div class="a mono" style="left:42px;top:990px">Qty</div>
<div class="a sunk" style="left:106px;top:988px;width:46px;height:28px;background:#fff"></div>
<div class="a sb" style="left:154px;top:988px;width:19px;height:13px"><svg class="a" style="left:5px;top:4px" width="8" height="5"><path d="M0 4L4 0L8 4z" fill="#000"/></svg></div>
<div class="a sb" style="left:154px;top:1001px;width:19px;height:15px"><svg class="a" style="left:5px;top:4px" width="8" height="5"><path d="M0 0L4 4L8 0z" fill="#000"/></svg></div>
<div class="a sunk" style="left:189px;top:988px;width:75px;height:28px;background:#c3c3c3"></div>
<div class="a mono" style="left:221px;top:990px">3</div>
<div class="a sunk" style="left:278px;top:988px;width:1259px;height:28px;background:#c3c3c3"></div>
<div class="a mono" style="left:281px;top:990px">Click here to change section number</div>
</body></html>
